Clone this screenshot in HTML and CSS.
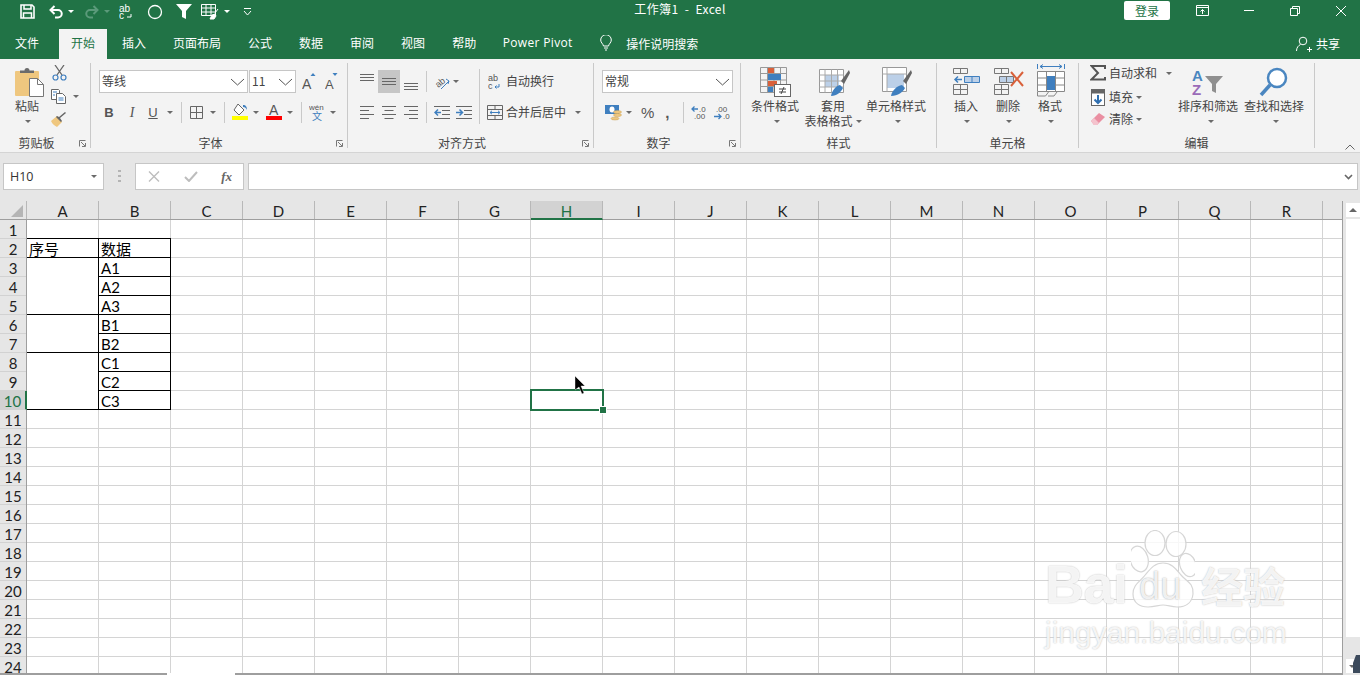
FILE: index.html
```html
<!DOCTYPE html>
<html lang="zh">
<head>
<meta charset="utf-8">
<title>工作簿1 - Excel</title>
<link rel="stylesheet" href="styles.css">
</head>
<body>
<div class="app">
  <header class="titlebar">
    <div class="qat">
      <svg class="ml20" width="15" height="15" viewBox="0 0 15 15"><path d="M1 1h11l2 2v11H1z" fill="none" stroke="#fff" stroke-width="1.6"/><path d="M4 1v4h7V1M3.500 14V9h8v5" fill="none" stroke="#fff" stroke-width="1.5"/></svg>
      <svg class="ml14" width="14" height="14" viewBox="0 0 14 14"><path d="M2 5h7a3.700 3.700 0 0 1 0 7.500H6" fill="none" stroke="#fff" stroke-width="2"/><path d="M5.500 1L1.500 5l4 4" fill="none" stroke="#fff" stroke-width="2"/></svg>
      <i class="caret light ml5"></i>
      <svg class="ml11" width="14" height="14" viewBox="0 0 14 14"><path d="M12 5H5a3.700 3.700 0 0 0 0 7.500h3" fill="none" stroke="#5b9a7a" stroke-width="2"/><path d="M8.500 1l4 4-4 4" fill="none" stroke="#5b9a7a" stroke-width="2"/></svg>
      <i class="caret dim ml5"></i>
      <svg class="ml9" width="14" height="16" viewBox="0 0 14 16"><text x="0" y="8" class="svgt w9">ab</text><text x="0" y="15" class="svgt w9">c</text><path d="M12 10v3H8" fill="none" stroke="#fff"/></svg>
      <svg class="ml14" width="16" height="16" viewBox="0 0 16 16"><circle cx="8" cy="8" r="6.500" fill="none" stroke="#fff" stroke-width="1.300"/></svg>
      <svg class="ml13" width="16" height="15" viewBox="0 0 16 15"><path d="M0 0h16l-6 7v8l-4-2V7z" fill="#fff"/></svg>
      <svg class="ml9" width="18" height="16" viewBox="0 0 18 16"><path d="M.5.500h14v11H.5zM.5 4h14M.5 8h14M5 .5v11M10 .5v11" fill="none" stroke="#fff"/><path d="M9 15l2-4 3-1 1 2-2 3zM14 9l3-4" fill="#fff" stroke="#fff"/></svg>
      <i class="caret light ml5"></i>
      <svg class="ml13" width="9" height="8" viewBox="0 0 9 8"><path d="M1 .5h7M1 3l3.500 4L8 3" fill="none" stroke="#fff"/></svg>
    </div>
    <div class="doc-title">工作簿1&nbsp;&nbsp;-&nbsp;&nbsp;Excel</div>
    <div class="win">
      <button class="login">登录</button>
      <svg class="ml26" width="13" height="11" viewBox="0 0 13 11"><path d="M.5.500h12v10H.5zM.5 2.500h12M6.500 9V4.500M4.500 6.500l2-2 2 2" fill="none" stroke="#fff"/></svg>
      <svg class="ml35" width="10" height="1" viewBox="0 0 10 1"><path d="M0 .5h10" stroke="#fff"/></svg>
      <svg class="ml36" width="10" height="10" viewBox="0 0 10 10"><path d="M.5 2.500h7v7h-7zM2.500 2.500v-2h7v7h-2" fill="none" stroke="#fff"/></svg>
      <svg class="ml36" width="10" height="10" viewBox="0 0 10 10"><path d="M0 0l10 10M10 0L0 10" stroke="#fff"/></svg>
    </div>
  </header>

  <nav class="tabs">
    <span class="tab tab-file">文件</span>
    <span class="tab tab-active">开始</span>
    <span class="tab tab-after">插入</span>
    <span class="tab">页面布局</span>
    <span class="tab">公式</span>
    <span class="tab">数据</span>
    <span class="tab">审阅</span>
    <span class="tab">视图</span>
    <span class="tab">帮助</span>
    <span class="tab tab-latin">Power Pivot</span>
    <svg class="bulb" width="12" height="16" viewBox="0 0 12 16"><path d="M3.500 11C3 8.500.7 7.800.7 5a5.300 5.300 0 0 1 10.600 0c0 2.800-2.300 3.500-2.800 6zM4 13h4M5 15h2" fill="none" stroke="#fff"/></svg>
    <span class="search">操作说明搜索</span>
    <span class="share">
      <svg width="16" height="16" viewBox="0 0 16 16"><circle cx="7" cy="5" r="3.800" fill="none" stroke="#fff"/><path d="M.5 15c0-3.500 2-5.500 4-6.500M11 13.500h5M13.500 11v5" fill="none" stroke="#fff"/></svg>
      <span class="share-text">共享</span>
    </span>
  </nav>

  <section class="ribbon">
    <div class="group g1">
      <div class="body row-body">
        <div class="tool paste">
          <svg class="big" width="29" height="30" viewBox="0 0 29 30"><rect x="0" y="4" width="24" height="25" rx="1" fill="#efc77f"/><path d="M5 6V3.500h4.500a2.500 2.500 0 0 1 5 0H19V6z" fill="#6b6b6b"/><path d="M14.500 11.500h8l6 6v12h-14z" fill="#fff" stroke="#777"/><path d="M22.500 11.500v6h6" fill="none" stroke="#777"/></svg>
          <span class="tool-label">粘贴</span>
          <i class="caret tool-caret"></i>
        </div>
        <div class="clip-col">
          <svg class="ml1" width="15" height="16" viewBox="0 0 15 16"><path d="M3 0l7 10M12 0L5 10" stroke="#666" stroke-width="1.300"/><circle cx="3.500" cy="12.500" r="2.500" fill="none" stroke="#3f7fbf" stroke-width="1.200"/><circle cx="11.500" cy="12.500" r="2.500" fill="none" stroke="#3f7fbf" stroke-width="1.200"/></svg>
          <div class="clip-copy">
            <svg width="16" height="15" viewBox="0 0 16 15"><path d="M.5.500h7l1 1v9H.5z" fill="#fff" stroke="#666"/><path d="M5.500 4.500h6l3 3v7h-9z" fill="#fff" stroke="#666"/><path d="M2 3h4M2 6h2M7.500 9h5M7.500 11h5" stroke="#3f7fbf"/></svg>
            <i class="caret ml6"></i>
          </div>
          <svg class="clip-brush" width="17" height="15" viewBox="0 0 17 15"><path d="M0 9l6-5 5 6-5 5C4 14 1 12 0 9z" fill="#efc77f"/><path d="M5 5l5 5 1-1-2-3 6-5-1-1-6 5-2-1z" fill="#666"/></svg>
        </div>
      </div>
      <div class="foot"><span class="foot-label">剪贴板</span><span class="launch"><svg width="7" height="7" viewBox="0 0 7 7"><path d="M.5 6.500v-6h6M2 2l4 4M6.500 3v3.500H3" fill="none" stroke="#777"/></svg></span></div>
    </div>

    <div class="group g2">
      <div class="body">
        <div class="row-top">
          <div class="select font-sel"><span>等线</span><svg width="15" height="8" viewBox="0 0 15 8"><path d="M1 1l6.500 6L14 1" fill="none" stroke="#555"/></svg></div>
          <div class="select size-sel"><span>11</span><svg width="15" height="8" viewBox="0 0 15 8"><path d="M1 1l6.500 6L14 1" fill="none" stroke="#555"/></svg></div>
          <svg class="ml6" width="14" height="20" viewBox="0 0 14 20"><text x="0" y="17" class="svgt g14">A</text><path d="M8.500 4l2.500-3 2.500 3z" fill="#3f7fbf"/></svg>
          <svg class="ml9" width="13" height="20" viewBox="0 0 13 20"><text x="0" y="17" class="svgt g12">A</text><path d="M7.500 1h5L10 4z" fill="#3f7fbf"/></svg>
        </div>
        <div class="row-bot">
          <span class="fmt bold ml13">B</span>
          <span class="fmt ital ml13">I</span>
          <span class="fmt under ml11">U</span>
          <i class="caret ml9"></i>
          <i class="vsep ml8"></i>
          <svg class="ml8" width="13" height="13" viewBox="0 0 13 13"><path d="M.5.500h12v12H.5zM6.500.5v12M.5 6.500h12" fill="none" stroke="#666"/></svg>
          <i class="caret ml7"></i>
          <i class="vsep ml8"></i>
          <svg class="ml7" width="16" height="19" viewBox="0 0 16 19"><path d="M6 1l6 6-5 5-5-5z" fill="#fff" stroke="#666"/><path d="M11 2c3 0 4 2 4 5-1-2-2-3-4-3z" fill="#3f7fbf"/><rect y="13" width="16" height="4" fill="#ff0"/></svg>
          <i class="caret ml5"></i>
          <svg class="ml7" width="16" height="19" viewBox="0 0 16 19"><text x="3" y="12" class="svgt g14">A</text><rect y="13" width="16" height="4" fill="#f00"/></svg>
          <i class="caret ml5"></i>
          <i class="vsep ml8"></i>
          <svg class="ml7" width="16" height="21" viewBox="0 0 16 21"><text x="0" y="8" class="svgt g8">wén</text><text x="3" y="18" class="svgt b10">文</text></svg>
          <i class="caret ml5"></i>
        </div>
      </div>
      <div class="foot"><span class="foot-label">字体</span><span class="launch"><svg width="7" height="7" viewBox="0 0 7 7"><path d="M.5 6.500v-6h6M2 2l4 4M6.500 3v3.500H3" fill="none" stroke="#777"/></svg></span></div>
    </div>

    <div class="group g3">
      <div class="body row-body">
        <div class="align-block">
          <div class="row-top">
            <span class="slot ml12 start"><svg width="14" height="7" viewBox="0 0 14 7"><path d="M0 .5h14M0 3.500h14M0 6.500h14" stroke="#666"/></svg></span>
            <span class="slot-on ml4"><svg width="14" height="7" viewBox="0 0 14 7"><path d="M0 .5h14M0 3.500h14M0 6.500h14" stroke="#666"/></svg></span>
            <span class="slot ml4 end"><svg width="14" height="7" viewBox="0 0 14 7"><path d="M0 .5h14M0 3.500h14M0 6.500h14" stroke="#666"/></svg></span>
            <i class="vsep ml8"></i>
            <svg class="ml7" width="16" height="18" viewBox="0 0 16 18"><text x="2" y="13" transform="rotate(-40 6 11)" class="svgt g9">ab</text><path d="M7 16l8-8M12 6l3 2-1 3" fill="none" stroke="#3f7fbf"/></svg>
            <i class="caret ml3"></i>
          </div>
          <div class="row-bot">
            <svg class="ml12" width="14" height="13" viewBox="0 0 14 13"><path d="M0 .5h14M0 4.500h9M0 8.500h14M0 12.500h9" stroke="#666"/></svg>
            <svg class="ml8" width="14" height="13" viewBox="0 0 14 13"><path d="M0 .5h14M2.500 4.500h9M0 8.500h14M2.500 12.500h9" stroke="#666"/></svg>
            <svg class="ml8" width="14" height="13" viewBox="0 0 14 13"><path d="M0 .5h14M5 4.500h9M0 8.500h14M5 12.500h9" stroke="#666"/></svg>
            <i class="vsep ml8"></i>
            <svg class="ml7" width="16" height="13" viewBox="0 0 16 13"><path d="M0 .5h16M8 4.500h8M8 8.500h8M0 12.500h16" stroke="#666"/><path d="M7 6.500H1M4 3.500l-3 3 3 3" fill="none" stroke="#3f7fbf" stroke-width="1.500"/></svg>
            <svg class="ml6" width="16" height="13" viewBox="0 0 16 13"><path d="M0 .5h16M8 4.500h8M8 8.500h8M0 12.500h16" stroke="#666"/><path d="M0 6.500h6M3.500 3.500l3 3-3 3" fill="none" stroke="#3f7fbf" stroke-width="1.500"/></svg>
          </div>
        </div>
        <i class="vsep long ml7"></i>
        <div class="wrap-block">
          <div class="row-top">
            <svg class="ml8" width="12" height="18" viewBox="0 0 12 18"><text x="0" y="8" class="svgt g9">ab</text><text x="0" y="16" class="svgt g9">c</text><path d="M11 11v3H7M8.500 12.500L7 14l1.500 1.500" fill="none" stroke="#3f7fbf"/></svg>
            <span class="txt ml6">自动换行</span>
          </div>
          <div class="row-bot">
            <svg class="ml7" width="16" height="15" viewBox="0 0 16 15"><path d="M.5.500h15v14H.5zM.5 4.500h15M.5 10.500h15M8 .5v4M8 10.500v4" fill="none" stroke="#666"/><path d="M3 7.500h10M5 5.800L3 7.500l2 1.700M11 5.800l2 1.700-2 1.700" fill="none" stroke="#3f7fbf"/></svg>
            <span class="txt ml3">合并后居中</span>
            <i class="caret ml9"></i>
          </div>
        </div>
      </div>
      <div class="foot"><span class="foot-label">对齐方式</span><span class="launch"><svg width="7" height="7" viewBox="0 0 7 7"><path d="M.5 6.500v-6h6M2 2l4 4M6.500 3v3.500H3" fill="none" stroke="#777"/></svg></span></div>
    </div>

    <div class="group g4">
      <div class="body">
        <div class="row-top">
          <div class="select num-sel"><span>常规</span><svg width="15" height="8" viewBox="0 0 15 8"><path d="M1 1l6.500 6L14 1" fill="none" stroke="#555"/></svg></div>
        </div>
        <div class="row-bot">
          <svg class="ml11" width="17" height="17" viewBox="0 0 17 17"><rect x="0" y="1" width="14" height="9" fill="#3f7fbf"/><ellipse cx="7" cy="5.500" rx="2.500" ry="3" fill="#fff"/><ellipse cx="12.500" cy="8" rx="4" ry="1.500" fill="#efc77f" stroke="#c9a25a" stroke-width=".5"/><ellipse cx="12.500" cy="11" rx="4" ry="1.500" fill="#efc77f" stroke="#c9a25a" stroke-width=".5"/><ellipse cx="10" cy="14.500" rx="4" ry="1.500" fill="#efc77f" stroke="#c9a25a" stroke-width=".5"/></svg>
          <i class="caret ml4"></i>
          <span class="pct ml9">%</span>
          <span class="comma ml11">,</span>
          <i class="vsep ml13"></i>
          <svg class="ml7" width="17" height="18" viewBox="0 0 17 18"><text x="8" y="8" class="svgt g8">.0</text><text x="3" y="15" class="svgt g8">.00</text><path d="M7 5H1M3.500 2.500L1 5l2.500 2.500" fill="none" stroke="#3f7fbf" stroke-width="1.300"/></svg>
          <svg class="ml5" width="17" height="18" viewBox="0 0 17 18"><text x="3" y="8" class="svgt g8">.00</text><text x="10" y="15" class="svgt g8">.0</text><path d="M1 12.500h7M5.500 10L8 12.500 5.500 15" fill="none" stroke="#3f7fbf" stroke-width="1.300"/></svg>
        </div>
      </div>
      <div class="foot"><span class="foot-label">数字</span><span class="launch"><svg width="7" height="7" viewBox="0 0 7 7"><path d="M.5 6.500v-6h6M2 2l4 4M6.500 3v3.500H3" fill="none" stroke="#777"/></svg></span></div>
    </div>

    <div class="group g5">
      <div class="body row-body">
        <div class="tool t-cond">
          <svg class="big" width="31" height="30" viewBox="0 0 31 30"><path d="M.5.500h26v25H.5zM.5 6.500h26M.5 13h26M.5 19.500h26M7.500.5v25M14 .5v25M20.500.5v25" fill="none" stroke="#999"/><rect x="8" y="1" width="6" height="5" fill="#d9603a"/><rect x="8" y="7" width="13" height="6" fill="#3f7fbf"/><rect x="8" y="14" width="9" height="5" fill="#d9603a"/><rect x="8" y="20" width="5" height="5" fill="#3f7fbf"/><rect x="14.500" y="17.500" width="16" height="12" fill="#fff" stroke="#666"/><path d="M19 22h7M19 25h7M24 20l-3 7" stroke="#444" fill="none"/></svg>
          <span class="tool-label">条件格式</span>
          <i class="caret tool-caret"></i>
        </div>
        <div class="tool t-table">
          <svg class="big" width="31" height="30" viewBox="0 0 31 30"><path d="M.5 2.500h24v23H.5z" fill="#fff" stroke="#999"/><rect x="6" y="8" width="14" height="12" fill="#bcd0e8"/><path d="M.5 8h24M.5 14h24M.5 20h24M6 2.500v23M12.500 2.500v23M18.500 2.500v23" fill="none" stroke="#aaa"/><path d="M22 14l8-11 1 3-6 11z" fill="#666"/><path d="M12 29c1-6 5-10 9-11l3 3c-2 4-6 8-12 8z" fill="#3f7fbf"/></svg>
          <span class="tool-label">套用</span>
          <span class="tool-label second">表格格式<i class="caret ml3"></i></span>
        </div>
        <div class="tool t-style">
          <svg class="big" width="30" height="30" viewBox="0 0 30 30"><path d="M.5.500h24v24H.5z" fill="#fff" stroke="#999"/><rect x="5" y="7" width="17" height="14" fill="#bcd0e8"/><path d="M.5 7h24M5 .5v24" stroke="#aaa" fill="none"/><path d="M21 14l8-11 1 3-6 11z" fill="#666"/><path d="M9 29c1-6 6-10 11-11l3 3c-2 4-7 8-14 8z" fill="#3f7fbf"/></svg>
          <span class="tool-label">单元格样式</span>
          <i class="caret tool-caret"></i>
        </div>
      </div>
      <div class="foot"><span class="foot-label">样式</span></div>
    </div>

    <div class="group g6">
      <div class="body row-body">
        <div class="tool t-cell first-cell">
          <svg class="big" width="28" height="30" viewBox="0 0 28 30"><path d="M.5 1.500h14v5H.5zM7.500 1.500v5M.5 17.500h14v10H.5zM.5 22.500h14M7.500 17.500v10" fill="none" stroke="#777"/><path d="M11.500 9.500h15v6h-15zM19 9.500v6" fill="#bcd0e8" stroke="#3f7fbf"/><path d="M9 12.500H2M5 9.500l-3 3 3 3" fill="none" stroke="#3f7fbf" stroke-width="1.500"/></svg>
          <span class="tool-label">插入</span>
          <i class="caret tool-caret"></i>
        </div>
        <div class="tool t-cell">
          <svg class="big" width="31" height="30" viewBox="0 0 31 30"><path d="M.5 1.500h14v5H.5zM7.500 1.500v5M.5 17.500h14v10H.5zM.5 22.500h14M7.500 17.500v10" fill="none" stroke="#777"/><path d="M5.500 9.500h14v6h-14zM12.500 9.500v6" fill="#bcd0e8" stroke="#777"/><path d="M17 5l12 14M29 5L17 19" stroke="#d9603a" stroke-width="2"/></svg>
          <span class="tool-label">删除</span>
          <i class="caret tool-caret"></i>
        </div>
        <div class="tool t-cell">
          <svg class="big fmt-icon" width="28" height="33" viewBox="0 0 28 33"><path d="M.5 0v5M27.500 0v5M3 2.500h22M6 .5L3 2.500l3 2M22 .5l3 2-3 2" fill="none" stroke="#3f7fbf"/><path d="M.5 7.500h27v20H.5zM.5 14h27M.5 21h27M9.500 7.500v20M18.500 7.500v20" fill="#fff" stroke="#888"/><rect x="10" y="12" width="8" height="14" fill="#3f7fbf"/><path d="M.5 28v4h8l3-4M11 32h6l3-4" fill="none" stroke="#888"/></svg>
          <span class="tool-label">格式</span>
          <i class="caret tool-caret"></i>
        </div>
      </div>
      <div class="foot"><span class="foot-label">单元格</span></div>
    </div>

    <div class="group g7">
      <div class="body row-body">
        <div class="edit-col">
          <div class="edit-row r-sum">
            <svg width="16" height="16" viewBox="0 0 16 16"><path d="M15 4V1H1.500l6.500 7-6.500 6.500H15V12" fill="none" stroke="#555" stroke-width="2"/></svg>
            <span class="txt ml3">自动求和</span>
            <i class="caret ml9"></i>
          </div>
          <div class="edit-row r-fill">
            <svg width="16" height="17" viewBox="0 0 16 17"><rect x="1.500" y=".5" width="13" height="16" fill="#fff" stroke="#666"/><rect x="1.500" y=".5" width="13" height="4" fill="#666"/><path d="M8 6v8M4.500 10.500L8 14l3.500-3.500" fill="none" stroke="#2f6fb0" stroke-width="2"/></svg>
            <span class="txt ml3">填充</span>
            <i class="caret ml3"></i>
          </div>
          <div class="edit-row r-clear">
            <svg width="16" height="16" viewBox="0 0 16 16"><path d="M1 10l8-8 6 4-8 8H4z" fill="#ea8fa2"/><path d="M1 10l3 4h3l2-2-5-5z" fill="#f4c3cd"/></svg>
            <span class="txt ml3">清除</span>
            <i class="caret ml3"></i>
          </div>
        </div>
        <div class="tool t-sort">
          <svg class="big" width="32" height="30" viewBox="0 0 32 30"><text x="0" y="14" class="svgt a-blue">A</text><text x="0" y="28" class="svgt a-purple">Z</text><path d="M13 9h18l-7 8v9l-4-2v-7z" fill="#8f8f8f"/></svg>
          <span class="tool-label">排序和筛选</span>
          <i class="caret tool-caret"></i>
        </div>
        <div class="tool t-find">
          <svg class="big" width="30" height="30" viewBox="0 0 30 30"><circle cx="18" cy="11" r="9" fill="#fff" stroke="#4a86c0" stroke-width="2.500"/><path d="M11 18L2 28" stroke="#4a86c0" stroke-width="3.500"/></svg>
          <span class="tool-label">查找和选择</span>
          <i class="caret tool-caret"></i>
        </div>
      </div>
      <div class="foot"><span class="foot-label">编辑</span></div>
    </div>

    <svg class="collapse" width="10" height="6" viewBox="0 0 10 6"><path d="M.5 5.500L5 1l4.500 4.500" fill="none" stroke="#666"/></svg>
  </section>

  <section class="formula">
    <div class="namebox"><span>H10</span><i class="caret"></i></div>
    <svg class="dots" width="3" height="12" viewBox="0 0 3 12"><path d="M0 0h3v2H0zM0 5h3v2H0zM0 10h3v2H0z" fill="#b4b4b4"/></svg>
    <div class="fx-box">
      <svg width="12" height="11" viewBox="0 0 12 11"><path d="M1 .5l10 10M11 .5l-10 10" stroke="#bdbdbd" stroke-width="1.400"/></svg>
      <svg width="14" height="11" viewBox="0 0 14 11"><path d="M1 6l4 4 8-9" fill="none" stroke="#bdbdbd" stroke-width="2"/></svg>
      <span class="fx">fx</span>
    </div>
    <div class="fx-input"><svg width="9" height="6" viewBox="0 0 9 6"><path d="M1 1l3.500 3.500L8 1" fill="none" stroke="#666" stroke-width="1.600"/></svg></div>
  </section>

  <section class="sheet-wrap">
    <div class="sheet">
      <div class="colhead">
        <div class="corner"><svg width="12" height="12" viewBox="0 0 12 12"><path d="M12 0v12H0z" fill="#b5b5b5"/></svg></div>
        <span class="col">A</span><span class="col">B</span><span class="col">C</span><span class="col">D</span><span class="col">E</span><span class="col">F</span><span class="col">G</span><span class="col col-on">H</span><span class="col">I</span><span class="col">J</span><span class="col">K</span><span class="col">L</span><span class="col">M</span><span class="col">N</span><span class="col">O</span><span class="col">P</span><span class="col">Q</span><span class="col">R</span>
      </div>
      <div class="sheet-body">
        <div class="rowhead">
          <span class="rn">1</span><span class="rn">2</span><span class="rn">3</span><span class="rn">4</span><span class="rn">5</span><span class="rn">6</span><span class="rn">7</span><span class="rn">8</span><span class="rn">9</span><span class="rn rn-on">10</span><span class="rn">11</span><span class="rn">12</span><span class="rn">13</span><span class="rn">14</span><span class="rn">15</span><span class="rn">16</span><span class="rn">17</span><span class="rn">18</span><span class="rn">19</span><span class="rn">20</span><span class="rn">21</span><span class="rn">22</span><span class="rn">23</span><span class="rn">24</span>
        </div>
        <div class="cells">
          <div class="data">
            <div class="cell top">序号</div>
            <div class="cell top">数据</div>
            <div class="cell span3"></div>
            <div class="cell">A1</div>
            <div class="cell">A2</div>
            <div class="cell">A3</div>
            <div class="cell span2"></div>
            <div class="cell">B1</div>
            <div class="cell">B2</div>
            <div class="cell span3"></div>
            <div class="cell">C1</div>
            <div class="cell">C2</div>
            <div class="cell">C3</div>
          </div>
          <div class="selection"><i class="handle"></i></div>
          <svg class="pointer" width="11" height="20" viewBox="0 0 11 20"><path d="M0 0l10 10H6l3 7-2 1-3-7-4 3z" fill="#000" stroke="#fff" stroke-width=".4"/></svg>
        </div>
      </div>
    </div>
    <aside class="vscroll">
      <div class="sbtn"><i class="tri-up"></i></div>
      <div class="thumb"></div>
      <div class="track"></div>
      <div class="sbtn sbtn-down"><i class="caret"></i></div>
      <svg class="scroll-mark" width="7" height="18" viewBox="0 0 7 18"><path d="M3 0l4 0v18H0V8z" fill="#3c4a5c"/></svg>
    </aside>
  </section>

  <footer class="sheetbar"><i class="bar-a"></i><i class="bar-gap"></i><i class="bar-b"></i></footer>

  <div class="watermark">
    <div class="wm-top">
      <span class="wm-bai">Bai</span>
      <div class="wm-paw">
        <svg width="64" height="80" viewBox="0 0 64 80"><g fill="rgba(255,255,255,.8)" stroke="#d6d6d6" stroke-width="1.200"><ellipse cx="24" cy="13" rx="10" ry="12.500"/><ellipse cx="45" cy="14" rx="10" ry="12.500"/><ellipse cx="8" cy="29" rx="9" ry="13" transform="rotate(-15 8 29)"/><ellipse cx="57" cy="35" rx="8" ry="12" transform="rotate(-20 57 35)"/><path d="M32 33c9 0 13 6 18 12s13 8 12 19c-1 10-9 13-16 13-6 0-9-2-14-2s-8 2-15 2c-8 0-15-4-15-13 0-10 8-13 13-20 5-6 9-11 17-11z"/></g></svg>
        <span class="wm-du">du</span>
      </div>
      <span class="wm-cn">经验</span>
    </div>
    <div class="wm-url">jingyan.baidu.com</div>
  </div>
</div>
</body>
</html>
```

FILE: styles.css
```css
* { box-sizing: border-box; }
html, body { margin: 0; padding: 0; height: 100%; overflow: hidden; background: #fff; }
body { font-family: "Noto Sans CJK SC", "Liberation Sans", sans-serif; font-size: 12px; color: #444; }
svg { display: block; flex: none; }
i { display: block; flex: none; font-style: normal; }
.app { position: relative; width: 1360px; height: 675px; overflow: hidden; background: #e6e6e6; }

.ml1 { margin-left: 1px; } .ml3 { margin-left: 3px; } .ml4 { margin-left: 4px; } .ml5 { margin-left: 5px; }
.ml6 { margin-left: 6px; } .ml7 { margin-left: 7px; } .ml8 { margin-left: 8px; } .ml9 { margin-left: 9px; }
.ml11 { margin-left: 11px; } .ml12 { margin-left: 12px; } .ml13 { margin-left: 13px; } .ml14 { margin-left: 14px; }
.ml20 { margin-left: 20px; } .ml26 { margin-left: 26px; } .ml35 { margin-left: 35px; } .ml36 { margin-left: 36px; }

.caret { width: 0; height: 0; border-left: 3px solid transparent; border-right: 3px solid transparent; border-top: 3px solid #6a6a6a; }
.caret.light { border-top-color: #fff; }
.caret.dim { border-top-color: #5b9a7a; }

.svgt { font-family: "Liberation Sans", sans-serif; fill: #555; }
.w9 { font-size: 10px; fill: #fff; }
.g8 { font-size: 8px; }
.g9 { font-size: 9px; }
.g12 { font-size: 13px; }
.g14 { font-size: 14px; }
.b10 { font-size: 10px; fill: #3f7fbf; font-family: "Noto Sans CJK SC", sans-serif; }
.a-blue { font-size: 15px; font-weight: 700; fill: #4a86c0; }
.a-purple { font-size: 15px; font-weight: 700; fill: #9a6bb8; }

/* title bar */
.titlebar { display: grid; grid-template-columns: 1fr auto 1fr; height: 29px; background: #217346; color: #fff; }
.qat { display: flex; align-items: center; height: 23px; }
.doc-title { line-height: 18px; letter-spacing: .4px; color: #fff; }
.win { display: flex; align-items: center; justify-content: flex-end; height: 21px; padding-right: 14px; }
.login { width: 46px; height: 19px; margin: 0; padding: 0; border: 0; border-radius: 2px; background: #fff; color: #217346; font: 12px/19px "Noto Sans CJK SC", sans-serif; }

/* tabs */
.tabs { display: flex; align-items: stretch; height: 30px; background: #217346; color: #fff; line-height: 28px; }
.tab { padding: 0 13.5px; white-space: nowrap; }
.tab-file { padding: 0 20px 0 15px; }
.tab-active { padding: 0 12px; background: #f3f3f3; color: #217346; }
.tab-after { padding: 0 13.5px 0 15px; }
.tab-latin { padding-left: 13px; font-family: "Open Sans", sans-serif; letter-spacing: .35px; }
.bulb { margin: 6px 0 0 14px; }
.search { margin-left: 14px; line-height: 29px; }
.share { display: flex; align-items: center; margin-left: auto; padding-right: 20px; }
.share-text { margin-left: 4px; }

/* ribbon */
.ribbon { display: flex; align-items: flex-start; height: 94px; background: #f3f3f3; border-bottom: 1px solid #d4d4d4; }
.group { display: flex; flex-direction: column; height: 85px; margin-top: 4px; border-right: 1px solid #c9c9c9; flex: none; }
.g1 { width: 91px; } .g2 { width: 257px; } .g3 { width: 246px; } .g4 { width: 147px; } .g5 { width: 196px; } .g6 { width: 142px; } .g7 { width: 236px; }
.body { height: 72px; flex: none; }
.row-body { display: flex; }
.foot { display: flex; height: 13px; line-height: 15px; }
.foot-label { flex: 1; text-align: center; white-space: nowrap; }
.launch { width: 17px; padding: 5px 0 0 6px; flex: none; }

.tool { display: flex; flex-direction: column; align-items: center; flex: none; }
.big { margin-top: 4px; }
.tool-label { display: flex; align-items: center; height: 16px; line-height: 16px; margin-top: 1px; white-space: nowrap; }
.tool-label.second { margin-top: -1px; }
.tool-caret { margin-top: 6px; }
.paste { width: 28px; margin-left: 15px; align-items: flex-start; }
.paste .tool-caret { margin-left: 10px; }
.clip-col { margin-left: 8px; padding-top: 2px; }
.clip-copy { display: flex; align-items: center; margin-top: 8px; }
.clip-brush { margin-top: 8px; }

.row-top { display: flex; align-items: center; height: 23px; margin-top: 7px; }
.row-bot { display: flex; align-items: center; height: 21px; margin-top: 9px; }
.select { display: flex; align-items: center; justify-content: space-between; height: 23px; padding: 0 2px; background: #fff; border: 1px solid #c6c6c6; flex: none; }
.select span { margin-top: -2px; }
.font-sel { width: 149px; margin-left: 8px; margin-right: 1px; }
.size-sel { width: 47px; }
.num-sel { width: 131px; margin-left: 8px; }
.vsep { width: 1px; height: 21px; background: #c9c9c9; }
.vsep.long { height: 55px; margin-top: 6px; }
.fmt { width: 10px; text-align: center; font-family: "Liberation Sans", sans-serif; font-size: 13px; line-height: 16px; color: #555; flex: none; }
.bold { font-weight: 700; }
.ital { font-style: italic; font-family: "Liberation Serif", serif; font-size: 14px; }
.under { text-decoration: underline; }
.slot, .slot-on { display: flex; justify-content: center; height: 23px; flex: none; }
.slot { width: 14px; }
.slot.start { align-items: flex-start; padding-top: 4px; }
.slot.end { align-items: flex-end; padding-bottom: 3px; }
.slot-on { width: 22px; align-items: center; background: #c6c6c6; }
.align-block, .wrap-block { flex: none; }
.txt { margin-top: -2px; white-space: nowrap; }
.pct { font-family: "Liberation Sans", sans-serif; font-size: 15px; line-height: 16px; color: #555; }
.comma { font-family: "Liberation Sans", sans-serif; font-weight: 700; font-size: 15px; line-height: 14px; color: #555; }

.t-cond { width: 48px; margin-left: 10px; }
.t-cond .big { margin-left: 1px; }
.t-cond .tool-caret { margin-left: 4px; }
.t-table { width: 58px; margin-left: 5px; }
.t-table .big { margin-left: 3px; }
.t-style { width: 60px; margin-left: 4px; }
.t-style .big { margin-left: 2px; }
.t-style .tool-caret { margin-left: 4px; }
.t-cell { width: 42px; }
.first-cell { margin-left: 9px; }
.t-cell .tool-label { margin-left: -2px; }
.t-cell .fmt-icon { margin-top: 1px; }
.edit-col { width: 88px; margin-left: 11px; flex: none; }
.edit-row { display: flex; align-items: center; height: 16px; }
.r-sum { margin-top: 2px; }
.r-fill { margin-top: 8px; }
.r-clear { margin-top: 6px; }
.t-sort { width: 60px; }
.t-sort .tool-caret { margin-left: 5px; }
.t-find { width: 60px; margin-left: 6px; }
.t-find .tool-caret { margin-left: 4px; }
.collapse { margin: 85px 0 0 30px; }

/* formula bar */
.formula { display: flex; height: 48px; padding-top: 10px; background: #e6e6e6; }
.namebox { display: flex; align-items: center; justify-content: space-between; width: 101px; height: 27px; margin-left: 3px; padding: 0 6px; background: #fff; border: 1px solid #c6c6c6; font-family: "Open Sans", sans-serif; font-size: 12.5px; color: #333; }
.dots { margin: 7px 0 0 14px; }
.fx-box { display: flex; align-items: center; justify-content: space-between; width: 109px; height: 27px; margin-left: 14px; padding: 0 11px 0 12px; background: #fff; border: 1px solid #c6c6c6; }
.fx { font-family: "Liberation Serif", serif; font-style: italic; font-weight: 700; font-size: 13px; color: #666; }
.fx-input { display: flex; align-items: center; justify-content: flex-end; width: 1110px; height: 27px; margin-left: 4px; padding-right: 4px; background: #fff; border: 1px solid #c6c6c6; }

/* sheet */
.sheet-wrap { display: flex; height: 472px; }
.sheet { width: 1343px; height: 472px; overflow: hidden; border-right: 1px solid #9e9e9e; flex: none; }
.colhead { display: flex; height: 19px; background: #e6e6e6; border-bottom: 1px solid #9e9e9e; }
.corner { width: 27px; padding: 4px 0 0 11px; border-right: 1px solid #b8b8b8; flex: none; }
.col { width: 72px; border-right: 1px solid #b8b8b8; text-align: center; font-family: Lato, "Liberation Sans", sans-serif; font-size: 15px; line-height: 21px; color: #222; flex: none; }
.col-on { background: #d2d2d2; border-bottom: 2px solid #217346; margin-bottom: -1px; color: #217346; }
.sheet-body { display: flex; height: 453px; }
.rowhead { width: 27px; flex: none; background: #e6e6e6; border-right: 1px solid #9e9e9e; }
.rn { display: block; height: 19px; border-bottom: 1px solid #d2d2d2; text-align: center; font-family: Lato, "Liberation Sans", sans-serif; font-size: 15px; line-height: 20px; color: #222; }
.rn-on { background: #d2d2d2; color: #217346; border-right: 2px solid #217346; margin-right: -1px; }
.cells {
  position: relative; flex: 1; background-color: #fff;
  background-image:
    repeating-linear-gradient(to right, transparent 0 71px, #d4d4d4 71px 72px),
    repeating-linear-gradient(to bottom, transparent 0 18px, #d4d4d4 18px 19px);
}
.data { display: grid; grid-template-columns: 72px 72px; grid-template-rows: 20px repeat(8, 19px); width: 144px; margin-top: 18px; font-family: Lato, "Noto Sans CJK SC", sans-serif; font-size: 15px; color: #000; }
.cell { height: 100%; padding-left: 2px; line-height: 20px; background: #fff; border-right: 1px solid #000; border-bottom: 1px solid #000; white-space: nowrap; }
.cell.top { border-top: 1px solid #000; }
.span3 { grid-row: span 3; }
.span2 { grid-row: span 2; }
.selection { position: absolute; left: 503px; top: 169px; width: 74px; height: 22px; border: 2px solid #217346; }
.handle { position: absolute; right: -4px; bottom: -4px; width: 6px; height: 6px; background: #217346; outline: 1px solid #fff; }
.pointer { position: absolute; left: 548px; top: 156px; }

.vscroll { position: relative; display: flex; flex-direction: column; width: 14px; margin-left: 3px; padding-top: 2px; flex: none; }
.sbtn { display: flex; align-items: center; justify-content: center; height: 14px; background: #fff; flex: none; }
.tri-up { width: 0; height: 0; border-left: 4px solid transparent; border-right: 4px solid transparent; border-bottom: 4px solid #666; }
.thumb { height: 418px; margin-top: 2px; background: #fff; flex: none; }
.track { height: 22px; background: #e6e6e6; flex: none; }
.sbtn-down { justify-content: flex-start; padding-left: 3px; }
.scroll-mark { position: absolute; right: 0; bottom: 0; }

.sheetbar { display: flex; height: 2px; background: #e6e6e6; }
.bar-a { width: 167px; background: #9e9e9e; }
.bar-gap { width: 68px; background: #fff; }
.bar-b { width: 1108px; background: #9e9e9e; }

/* watermark */
.watermark { position: absolute; left: 1045px; top: 530px; width: 245px; color: rgba(255,255,255,.85); pointer-events: none; }
.wm-top { display: flex; height: 86px; }
.wm-bai { width: 88px; margin-top: 24px; font: 700 54px/60px "Liberation Sans", sans-serif; text-shadow: 0 0 1.5px #b4b4b4; letter-spacing: -.5px; flex: none; }
.wm-paw { position: relative; width: 64px; margin-left: -2px; flex: none; }
.wm-du { position: absolute; left: 8px; top: 34px; font: 400 38px/44px "Liberation Sans", sans-serif; text-shadow: 0 0 1.5px #999; }
.wm-cn { margin: 27px 0 0 6px; font: 700 42px/56px "Noto Sans CJK SC", sans-serif; text-shadow: 0 0 1.5px #b4b4b4; white-space: nowrap; }
.wm-url { font: 400 30px/34px "Liberation Sans", sans-serif; text-shadow: 0 0 1.5px #b4b4b4; white-space: nowrap; }
```
